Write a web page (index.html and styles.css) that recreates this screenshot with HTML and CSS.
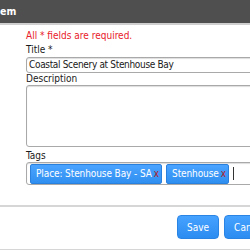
FILE: index.html
```html
<!DOCTYPE html>
<html>
<head>
<meta charset="utf-8">
<link rel="stylesheet" href="styles.css">
</head>
<body>
<div class="dialog">
  <div class="header">em</div>
  <div class="form">
    <div class="req">All * fields are required.</div>
    <div class="label">Title *</div>
    <div class="input">Coastal Scenery at Stenhouse Bay</div>
    <div class="label">Description</div>
    <div class="textarea"></div>
    <div class="label tagl">Tags</div>
    <div class="tags">
      <span class="chip">Place: Stenhouse Bay - SA<span class="x">x</span></span>
      <span class="chip">Stenhouse<span class="x">x</span></span>
      <span class="cursor"></span>
    </div>
  </div>
  <div class="footer">
    <button class="btn">Save</button>
    <button class="btn">Cancel</button>
  </div>
</div>
</body>
</html>
```
FILE: styles.css
```css
html, body {
  margin: 0;
  padding: 0;
  background: #fff;
  overflow: hidden;
}
.dialog {
  width: 250px;
  font-family: "DejaVu Sans Condensed", "DejaVu Sans", sans-serif;
  font-stretch: condensed;
  font-size: 10px;
  color: #1a1a1a;
}
.header {
  height: 23px;
  line-height: 23px;
  background: #4f4f4f;
  border-bottom: 2px solid #cfcfcf;
  color: #fff;
  font-weight: bold;
  font-size: 10.5px;
}
.form {
  padding: 3px 0 0 26px;
}
.req {
  color: #e8202a;
  line-height: 15px;
}
.label {
  line-height: 14px;
}
.input {
  width: 260px;
  height: 14px;
  line-height: 14px;
  border: 1px solid #a9a9a9;
  border-radius: 3px;
  padding-left: 2px;
  box-shadow: inset 0 1px 1px #ddd;
  white-space: nowrap;
  letter-spacing: -0.33px;
}
.input + .label {
  line-height: 12px;
}
.textarea {
  width: 260px;
  height: 60px;
  border: 1px solid #a9a9a9;
  border-radius: 3px;
  box-shadow: inset 0 1px 1px #ddd;
}
.tagl {
  margin-top: 2px;
  line-height: 13px;
}
.tags {
  width: 258px;
  height: 21px;
  border: 1px solid #a9a9a9;
  border-radius: 3px;
  box-shadow: inset 0 1px 1px #ddd;
  display: flex;
  align-items: center;
  gap: 4px;
  padding-left: 3px;
  white-space: nowrap;
}
.chip {
  display: inline-flex;
  align-items: center;
  height: 18px;
  padding: 0 2px 0 5px;
  background: linear-gradient(#4aa3ff, #2f8ff0);
  border: 1px solid #2a80dd;
  color: #fff;
  border-radius: 2px;
  letter-spacing: -0.1px;
}
.x {
  color: #b0202a;
  margin-left: 2px;
}
.cursor {
  width: 1px;
  height: 13px;
  background: #333;
}
.footer {
  margin-top: 20px;
  border-top: 2px solid #d6d6d6;
  border-bottom: 2px solid #d6d6d6;
  height: 34px;
  display: flex;
  align-items: flex-start;
  padding: 8px 0 0 177px;
  gap: 5px;
  width: 260px;
  box-sizing: content-box;
}
.btn {
  flex: none;
  height: 24px;
  padding: 0 9px;
  font-family: inherit;
  font-stretch: condensed;
  font-size: 10px;
  color: #fff;
  background: linear-gradient(#46a2ff, #2c8cf0);
  border: 1px solid #2a84e4;
  border-radius: 4px;
}
```
